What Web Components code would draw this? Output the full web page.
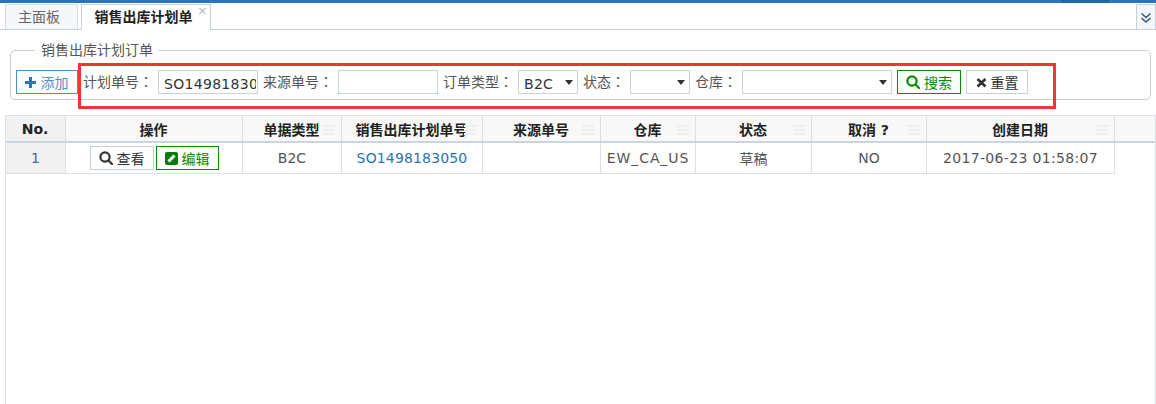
<!DOCTYPE html>
<html>
<head>
<meta charset="utf-8">
<style>
  html, body { margin: 0; padding: 0; height: 100%; background: #fff; overflow: hidden; }
  body { font-family: "DejaVu Sans", "Noto Sans CJK SC", sans-serif; font-size: 14px; color: #333; }
</style>
</head>
<body>
<order-page></order-page>

<template id="tab-bar-tpl">
  <style>
    :host { display: block; height: 30px; border-top: 3px solid #2a74b8; box-sizing: border-box; position: relative; }
    .bar { display: flex; height: 27px; padding: 1px 0 0 5px; box-sizing: border-box; border-bottom: 1px solid #c5d0d8; gap: 3px; align-items: flex-start; }
    ::slotted(*) { flex: none; }
    .spacer { flex: 1; }
    .more { flex: none; width: 20px; height: 25px; box-sizing: border-box; background: #f3f7fb; border: 1px solid #c5d0d8; border-bottom: 0; display: flex; align-items: center; justify-content: center; padding-top: 1px; }
    .mark { position: absolute; top: -3px; left: 1061px; width: 48px; height: 3px; background: #1f6aa3; }
  </style>
  <div class="mark"></div>
  <div class="bar">
    <slot></slot>
    <div class="spacer"></div>
    <div class="more">
      <svg width="12" height="12" viewBox="0 0 12 12" fill="none" stroke="#3a5a7c" stroke-width="1.6"><path d="M1.500 1.500 6 5.500l4.500-4"/><path d="M1.500 6 6 10l4.500-4"/></svg>
    </div>
  </div>
</template>

<template id="tab-item-tpl">
  <style>
    :host { display: block; box-sizing: border-box; height: 25px; padding-right: 5px; background: #f5f7f9; border: 1px solid #d5dde3; border-bottom: 0; color: #666; text-align: center; line-height: 25px; font-size: 14px; position: relative; }
    :host([active]) { height: 26px; background: #fff; border-color: #c5d0d8; color: #222; font-weight: 700; }
    .x { position: absolute; top: -1px; right: 2px; line-height: 14px; font-size: 13px; font-weight: 400; color: #b5bcc4; }
  </style>
  <slot></slot><span class="x" id="x"></span>
</template>

<template id="search-panel-tpl">
  <style>
    :host { display: block; position: relative; margin: 20px 5px 0 10px; height: 50px; box-sizing: border-box; border: 1px solid #c5d0d8; border-radius: 5px; }
    .legend { position: absolute; left: 24px; top: -9px; padding: 0 6px; background: #fff; color: #555; font-size: 14px; line-height: 17px; }
    .row { display: flex; align-items: center; height: 24px; margin: 19px 0 0 5px; }
    .note { position: absolute; left: 67px; top: 12px; width: 978px; height: 46px; box-sizing: border-box; border: 3px solid #f53535; pointer-events: none; }
  </style>
  <div class="legend">销售出库计划订单</div>
  <div class="row"><slot></slot></div>
  <div class="note"></div>
</template>

<template id="ui-button-tpl">
  <style>
    :host { display: inline-flex; align-items: center; justify-content: center; gap: 4px; box-sizing: border-box; height: 24px; border: 1px solid #c5d0d8; background: #fff; color: #333; font-size: 14px; flex: none; }
    :host([tone="blue"]) { border-color: #4a90d0; color: #5b8fc0; background: #fbfcfe; }
    :host([tone="green"]) { border-color: #0a8a0a; color: #0a8a0a; background: #fafdfa; }
    svg { display: block; }
  </style>
  <span id="icon"></span><slot></slot>
</template>

<template id="field-label-tpl">
  <style>
    :host { display: inline-block; flex: none; margin-left: 5px; color: #555; font-size: 14px; line-height: 20px; white-space: nowrap; margin-top: -2px; }
    .colon { font-family: "Noto Sans CJK TC", sans-serif; }
  </style>
  <slot></slot><span class="colon">：</span>
</template>

<template id="text-box-tpl">
  <style>
    :host { display: block; flex: none; box-sizing: border-box; height: 24px; border: 1px solid #c8d2d9; background: #fff; font-size: 14px; color: #333; line-height: 24px; padding: 1px 1px 0 5px; white-space: nowrap; position: relative; }
    .value { overflow: hidden; height: 22px; letter-spacing: .3px; }
    .arrow { position: absolute; right: 4px; top: 9px; width: 0; height: 0; border: 4.500px solid transparent; border-top: 5px solid #333; border-bottom: 0; }
  </style>
  <div class="value"><slot></slot></div><span id="arrow"></span>
</template>

<template id="data-table-tpl">
  <style>
    :host { display: block; margin: 15px 0 0 5px; height: 289px; box-sizing: border-box; border: 1px solid #dcdfe3; border-bottom: 0; }
    .head { display: flex; height: 25px; background: #f8f8f9; border-bottom: 2px solid #ccd5dd; }
    .body { display: flex; height: 31px; }
    ::slotted(*) { flex: none; }
  </style>
  <div class="head"><slot name="head"></slot></div>
  <div class="body"><slot name="row"></slot></div>
</template>

<template id="table-cell-tpl">
  <style>
    :host { display: flex; flex: none; align-items: center; justify-content: center; gap: 2px; box-sizing: border-box; padding-left: 2px; position: relative; border-right: 1px solid #dcdfe3; border-bottom: 1px solid #dcdfe3; color: #555; font-size: 14px; white-space: nowrap; }
    :host([head]) { border-bottom: 0; padding-left: 1px; color: #222; font-weight: 700; }
    :host([num]) { background: #f1f1f1; }
    .grip { position: absolute; right: 6px; top: 9px; width: 12px; height: 10px; background: repeating-linear-gradient(#eeeeee 0 2px, transparent 2px 4px); }
  </style>
  <slot></slot><span id="grip"></span>
</template>

<script>
// icons used by the buttons
const ICONS = {
  plus: '<svg width="13" height="13" viewBox="0 0 13 13"><path d="M5 1h3v4h4v3H8v4H5V8H1V5h4z" fill="#2a74b8"/></svg>',
  search: '<svg width="14" height="14" viewBox="0 0 14 14" fill="none" stroke="currentColor" stroke-width="2.200"><circle cx="6" cy="6" r="4.600"/><path d="M9.500 9.500 13 13" stroke-linecap="round"/></svg>',
  close: '<svg width="11" height="11" viewBox="0 0 11 11" fill="none" stroke="#333" stroke-width="2.600"><path d="M1.500 2 9.500 9.500M9.500 2 1.500 9.500"/></svg>',
  edit: '<svg width="13" height="13" viewBox="0 0 13 13"><rect width="13" height="13" rx="2" fill="#0a7a0a"/><path d="M3.500 9.500 9.500 3.500" stroke="#fff" stroke-width="3" fill="none"/></svg>'
};

class ShadowBase extends HTMLElement {
  constructor() {
    super();
    const tpl = document.getElementById(this.constructor.tpl);
    this.attachShadow({ mode: 'open' }).appendChild(tpl.content.cloneNode(true));
  }
}

class TabBar extends ShadowBase { static tpl = 'tab-bar-tpl'; }

class TabItem extends ShadowBase {
  static tpl = 'tab-item-tpl';
  connectedCallback() {
    this.style.width = this.getAttribute('w') + 'px';
    if (this.hasAttribute('closable')) this.shadowRoot.getElementById('x').textContent = '×';
  }
}

class SearchPanel extends ShadowBase { static tpl = 'search-panel-tpl'; }

class UiButton extends ShadowBase {
  static tpl = 'ui-button-tpl';
  connectedCallback() {
    this.style.width = this.getAttribute('w') + 'px';
    const icon = this.getAttribute('icon');
    if (icon) this.shadowRoot.getElementById('icon').innerHTML = ICONS[icon];
  }
}

class FieldLabel extends ShadowBase {
  static tpl = 'field-label-tpl';
  connectedCallback() {
    this.style.width = this.getAttribute('w') + 'px';
  }
}

class TextBox extends ShadowBase {
  static tpl = 'text-box-tpl';
  connectedCallback() {
    this.style.width = this.getAttribute('w') + 'px';
    if (this.hasAttribute('arrow')) this.shadowRoot.getElementById('arrow').className = 'arrow';
  }
}

class DataTable extends ShadowBase { static tpl = 'data-table-tpl'; }

class TableCell extends ShadowBase {
  static tpl = 'table-cell-tpl';
  connectedCallback() {
    this.style.width = this.getAttribute('w') + 'px';
    if (this.hasAttribute('grip')) this.shadowRoot.getElementById('grip').className = 'grip';
  }
}

class OrderPage extends HTMLElement {
  constructor() {
    super();
    const cols = [60, 177, 99, 141, 118, 95, 116, 115, 188];
    const heads = ['No.', '操作', '单据类型', '销售出库计划单号', '来源单号', '仓库', '状态', '取消 ?', '创建日期'];
    const headCells = heads.map((h, i) =>
      `<table-cell slot="head" head w="${cols[i]}" ${i === 0 ? 'num' : ''} ${i > 1 ? 'grip' : ''}>${h}</table-cell>`).join('');
    this.attachShadow({ mode: 'open' }).innerHTML = `
      <style>
        :host { display: block; }
        a { color: #2a74b0; text-decoration: none; letter-spacing: .15px; }
        .no { color: #4a6a9c; }
      </style>
      <tab-bar>
        <tab-item w="73">主面板</tab-item>
        <tab-item w="130" active closable>销售出库计划单</tab-item>
      </tab-bar>
      <search-panel>
        <ui-button tone="blue" w="62" icon="plus" style="padding-right:2px">添加</ui-button>
        <field-label w="75">计划单号</field-label>
        <text-box w="100">SO1498183050</text-box>
        <field-label w="75">来源单号</field-label>
        <text-box w="100"></text-box>
        <field-label w="75">订单类型</field-label>
        <text-box w="60" arrow>B2C</text-box>
        <field-label w="47">状态</field-label>
        <text-box w="60" arrow></text-box>
        <field-label w="47">仓库</field-label>
        <text-box w="150" arrow></text-box>
        <ui-button tone="green" w="64" icon="search" style="margin-left:5px">搜索</ui-button>
        <ui-button w="62" icon="close" style="margin-left:5px">重置</ui-button>
      </search-panel>
      <data-table>
        ${headCells}
        <table-cell slot="row" w="60" num><span class="no">1</span></table-cell>
        <table-cell slot="row" w="177">
          <ui-button w="64" icon="search">查看</ui-button>
          <ui-button tone="green" w="63" icon="edit">编辑</ui-button>
        </table-cell>
        <table-cell slot="row" w="99">B2C</table-cell>
        <table-cell slot="row" w="141"><a>SO1498183050</a></table-cell>
        <table-cell slot="row" w="118"></table-cell>
        <table-cell slot="row" w="95" style="letter-spacing:.9px">EW_CA_US</table-cell>
        <table-cell slot="row" w="116">草稿</table-cell>
        <table-cell slot="row" w="115">NO</table-cell>
        <table-cell slot="row" w="188" style="letter-spacing:.33px">2017-06-23 01:58:07</table-cell>
      </data-table>`;
  }
}

customElements.define('tab-bar', TabBar);
customElements.define('tab-item', TabItem);
customElements.define('search-panel', SearchPanel);
customElements.define('ui-button', UiButton);
customElements.define('field-label', FieldLabel);
customElements.define('text-box', TextBox);
customElements.define('data-table', DataTable);
customElements.define('table-cell', TableCell);
customElements.define('order-page', OrderPage);
</script>
</body>
</html>
